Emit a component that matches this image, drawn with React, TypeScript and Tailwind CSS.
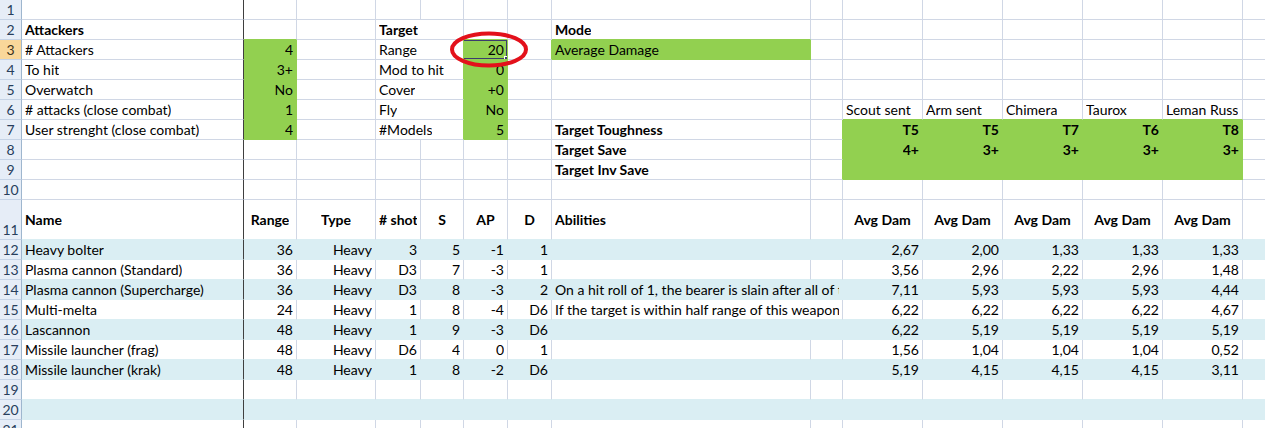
import React from 'react';

type Fill = 'g' | 'b' | 'n';
type Cell = { t?: string; a?: 'l' | 'r' | 'c'; b?: boolean; f?: Fill; s?: number; sel?: boolean };
type Row = { n: number; h: 20 | 40; cells: Record<number, Cell>; band?: boolean; head?: boolean; selRow?: boolean };

const BG: Record<Fill, string> = { g: 'bg-[#92d050]', b: 'bg-[#daeef3]', n: 'bg-white' };
const BR: Record<string, string> = {
  g: 'border-r-[#92d050]',
  b: 'border-r-[#daeef3]',
  n: 'border-r-[#d0d7e5]',
  d: 'border-r-[#3f3f3f]',
};
const BB: Record<Fill, string> = { g: 'border-b-[#92d050]', b: 'border-b-[#daeef3]', n: 'border-b-[#d0d7e5]' };
const SPAN: Record<number, string> = { 1: '', 2: 'col-span-2', 3: 'col-span-3' };
const ALIGN = { l: 'justify-start', r: 'justify-end', c: 'justify-center' };

const NCOL = 15; // A..O

const g = (t?: string, extra: Partial<Cell> = {}): Cell => ({ t, a: 'r', f: 'g', ...extra });

const weapons: [string, string, string, string, string, string, string, string, string[]][] = [
  ['Heavy bolter', '36', 'Heavy', '3', '5', '-1', '1', '', ['2,67', '2,00', '1,33', '1,33', '1,33']],
  ['Plasma cannon (Standard)', '36', 'Heavy', 'D3', '7', '-3', '1', '', ['3,56', '2,96', '2,22', '2,96', '1,48']],
  [
    'Plasma cannon (Supercharge)',
    '36',
    'Heavy',
    'D3',
    '8',
    '-3',
    '2',
    "On a hit roll of 1, the bearer is slain after all of this weapon's shots have been resolved.",
    ['7,11', '5,93', '5,93', '5,93', '4,44'],
  ],
  [
    'Multi-melta',
    '24',
    'Heavy',
    '1',
    '8',
    '-4',
    'D6',
    'If the target is within half range of this weapon, roll two dice when inflicting damage with it and discard the lowest result.',
    ['6,22', '6,22', '6,22', '6,22', '4,67'],
  ],
  ['Lascannon', '48', 'Heavy', '1', '9', '-3', 'D6', '', ['6,22', '5,19', '5,19', '5,19', '5,19']],
  ['Missile launcher (frag)', '48', 'Heavy', 'D6', '4', '0', '1', '', ['1,56', '1,04', '1,04', '1,04', '0,52']],
  ['Missile launcher (krak)', '48', 'Heavy', '1', '8', '-2', 'D6', '', ['5,19', '4,15', '4,15', '4,15', '3,11']],
];

function buildRows(): Row[] {
  const rows: Row[] = [];
  rows.push({ n: 1, h: 20, cells: {} });
  rows.push({
    n: 2,
    h: 20,
    cells: { 0: { t: 'Attackers', b: true }, 3: { t: 'Target', b: true, s: 2 }, 7: { t: 'Mode', b: true } },
  });
  rows.push({
    n: 3,
    h: 20,
    selRow: true,
    cells: {
      0: { t: '# Attackers' },
      1: g('4'),
      3: { t: 'Range', s: 2 },
      5: g('20', { sel: true }),
      7: { t: 'Average Damage', f: 'g' },
    },
  });
  rows.push({ n: 4, h: 20, cells: { 0: { t: 'To hit' }, 1: g('3+'), 3: { t: 'Mod to hit', s: 2 }, 5: g('0') } });
  rows.push({ n: 5, h: 20, cells: { 0: { t: 'Overwatch' }, 1: g('No'), 3: { t: 'Cover', s: 2 }, 5: g('+0') } });
  rows.push({
    n: 6,
    h: 20,
    cells: {
      0: { t: '# attacks (close combat)' },
      1: g('1'),
      3: { t: 'Fly', s: 2 },
      5: g('No'),
      9: { t: 'Scout sent' },
      10: { t: 'Arm sent' },
      11: { t: 'Chimera' },
      12: { t: 'Taurox' },
      13: { t: 'Leman Russ' },
    },
  });
  rows.push({
    n: 7,
    h: 20,
    cells: {
      0: { t: 'User strenght (close combat)' },
      1: g('4'),
      3: { t: '#Models', s: 2 },
      5: g('5'),
      7: { t: 'Target Toughness', b: true },
      9: g('T5', { b: true }),
      10: g('T5', { b: true }),
      11: g('T7', { b: true }),
      12: g('T6', { b: true }),
      13: g('T8', { b: true }),
    },
  });
  rows.push({
    n: 8,
    h: 20,
    cells: {
      7: { t: 'Target Save', b: true },
      9: g('4+', { b: true }),
      10: g('3+', { b: true }),
      11: g('3+', { b: true }),
      12: g('3+', { b: true }),
      13: g('3+', { b: true }),
    },
  });
  rows.push({
    n: 9,
    h: 20,
    cells: { 7: { t: 'Target Inv Save', b: true }, 9: g(), 10: g(), 11: g(), 12: g(), 13: g() },
  });
  rows.push({ n: 10, h: 20, cells: {} });
  rows.push({
    n: 11,
    h: 40,
    head: true,
    cells: {
      0: { t: 'Name', b: true },
      1: { t: 'Range', b: true, a: 'c' },
      2: { t: 'Type', b: true, a: 'c' },
      3: { t: '# shot', b: true, a: 'c' },
      4: { t: 'S', b: true, a: 'c' },
      5: { t: 'AP', b: true, a: 'c' },
      6: { t: 'D', b: true, a: 'c' },
      7: { t: 'Abilities', b: true },
      9: { t: 'Avg Dam', b: true, a: 'c' },
      10: { t: 'Avg Dam', b: true, a: 'c' },
      11: { t: 'Avg Dam', b: true, a: 'c' },
      12: { t: 'Avg Dam', b: true, a: 'c' },
      13: { t: 'Avg Dam', b: true, a: 'c' },
    },
  });
  weapons.forEach((w, i) => {
    const band = i % 2 === 0;
    const f: Fill = band ? 'b' : 'n';
    const cells: Record<number, Cell> = {};
    for (let c = 0; c < NCOL; c++) cells[c] = { f };
    cells[0] = { t: w[0], f };
    for (let c = 1; c <= 6; c++) cells[c] = { t: w[c], a: 'r', f };
    cells[7] = w[7] ? { t: w[7], f, s: 2 } : { f };
    w[8].forEach((v, k) => (cells[9 + k] = { t: v, a: 'r', f }));
    rows.push({ n: 12 + i, h: 20, band, cells });
  });
  const mk = (n: number, band: boolean): Row => {
    const cells: Record<number, Cell> = {};
    const f: Fill = band ? 'b' : 'n';
    for (let c = 0; c < NCOL; c++) cells[c] = { f };
    return { n, h: 20, band, cells };
  };
  rows.push(mk(19, false));
  rows.push(mk(20, true));
  rows.push(mk(21, false));
  return rows;
}

const rows = buildRows();

function fillAt(r: number, c: number): Fill {
  const row = rows[r];
  if (!row) return 'n';
  for (let k = c; k >= 0; k--) {
    const cell = row.cells[k];
    if (cell) {
      const s = cell.s || 1;
      if (k + s - 1 >= c) return cell.f || 'n';
      return 'n';
    }
  }
  return 'n';
}

export default function App() {
  return (
    <div className="relative w-[1265px] h-[428px] overflow-hidden bg-white font-['Lato','Liberation_Sans',sans-serif] text-[14px] text-black">
      <div className="grid w-[1323px] grid-cols-[22px_222px_53px_79px_45px_43px_44px_44px_259px_32px_80px_80px_80px_80px_80px_80px]">
        {rows.map((row, ri) => {
          const hCls = row.h === 40 ? 'h-[40px]' : 'h-[20px]';
          const out: React.ReactNode[] = [];
          out.push(
            <div
              key={`h${ri}`}
              className={`${hCls} flex items-end justify-center border-r border-b border-r-[#9eb6ce] border-b-[#c5d3e6] text-[14px] leading-[18px] ${
                row.selRow ? 'bg-[#f9d79a] text-[#3d3320]' : 'bg-[#e6edf7] text-[#283e5c]'
              }`}
            >
              {row.n}
            </div>
          );
          let c = 0;
          while (c < NCOL) {
            const cell: Cell = row.cells[c] || {};
            const s = cell.s || 1;
            const last = c + s - 1;
            const f: Fill = cell.f || 'n';
            const rightFill = fillAt(ri, last + 1);
            const rightKey = last === 0 ? 'd' : f !== 'n' ? f : rightFill !== 'n' ? rightFill : 'n';
            const belowFill = fillAt(ri + 1, c);
            const bottomKey: Fill = f !== 'n' ? f : belowFill !== 'n' ? belowFill : 'n';
            const align = ALIGN[cell.a || 'l'];
            out.push(
              <div
                key={`${ri}-${c}`}
                className={`${hCls} ${SPAN[s]} relative flex ${row.head ? 'items-center' : 'items-end'} ${align} overflow-hidden whitespace-nowrap border-r border-b px-[3px] leading-[18px] ${BG[f]} ${BR[rightKey]} ${BB[bottomKey]} ${cell.b ? 'font-bold' : ''}`}
              >
                {cell.t && <span className="min-w-0 overflow-hidden">{cell.t}</span>}
                {cell.sel && (
                  <span className="absolute -left-[2px] -top-[1px] -right-[1px] -bottom-[1px] border-2 border-[#3c3b6e]">
                    <span className="absolute -right-[3px] -bottom-[3px] w-[5px] h-[5px] bg-[#3c3b6e] border border-white" />
                  </span>
                )}
              </div>
            );
            c += s;
          }
          return <React.Fragment key={ri}>{out}</React.Fragment>;
        })}
      </div>
      <svg className="absolute left-[448px] top-[30px]" width="82" height="40" viewBox="0 0 82 40">
        <ellipse cx="41" cy="19.5" rx="37" ry="16" fill="none" stroke="#e3111b" strokeWidth="4" />
      </svg>
    </div>
  );
}
